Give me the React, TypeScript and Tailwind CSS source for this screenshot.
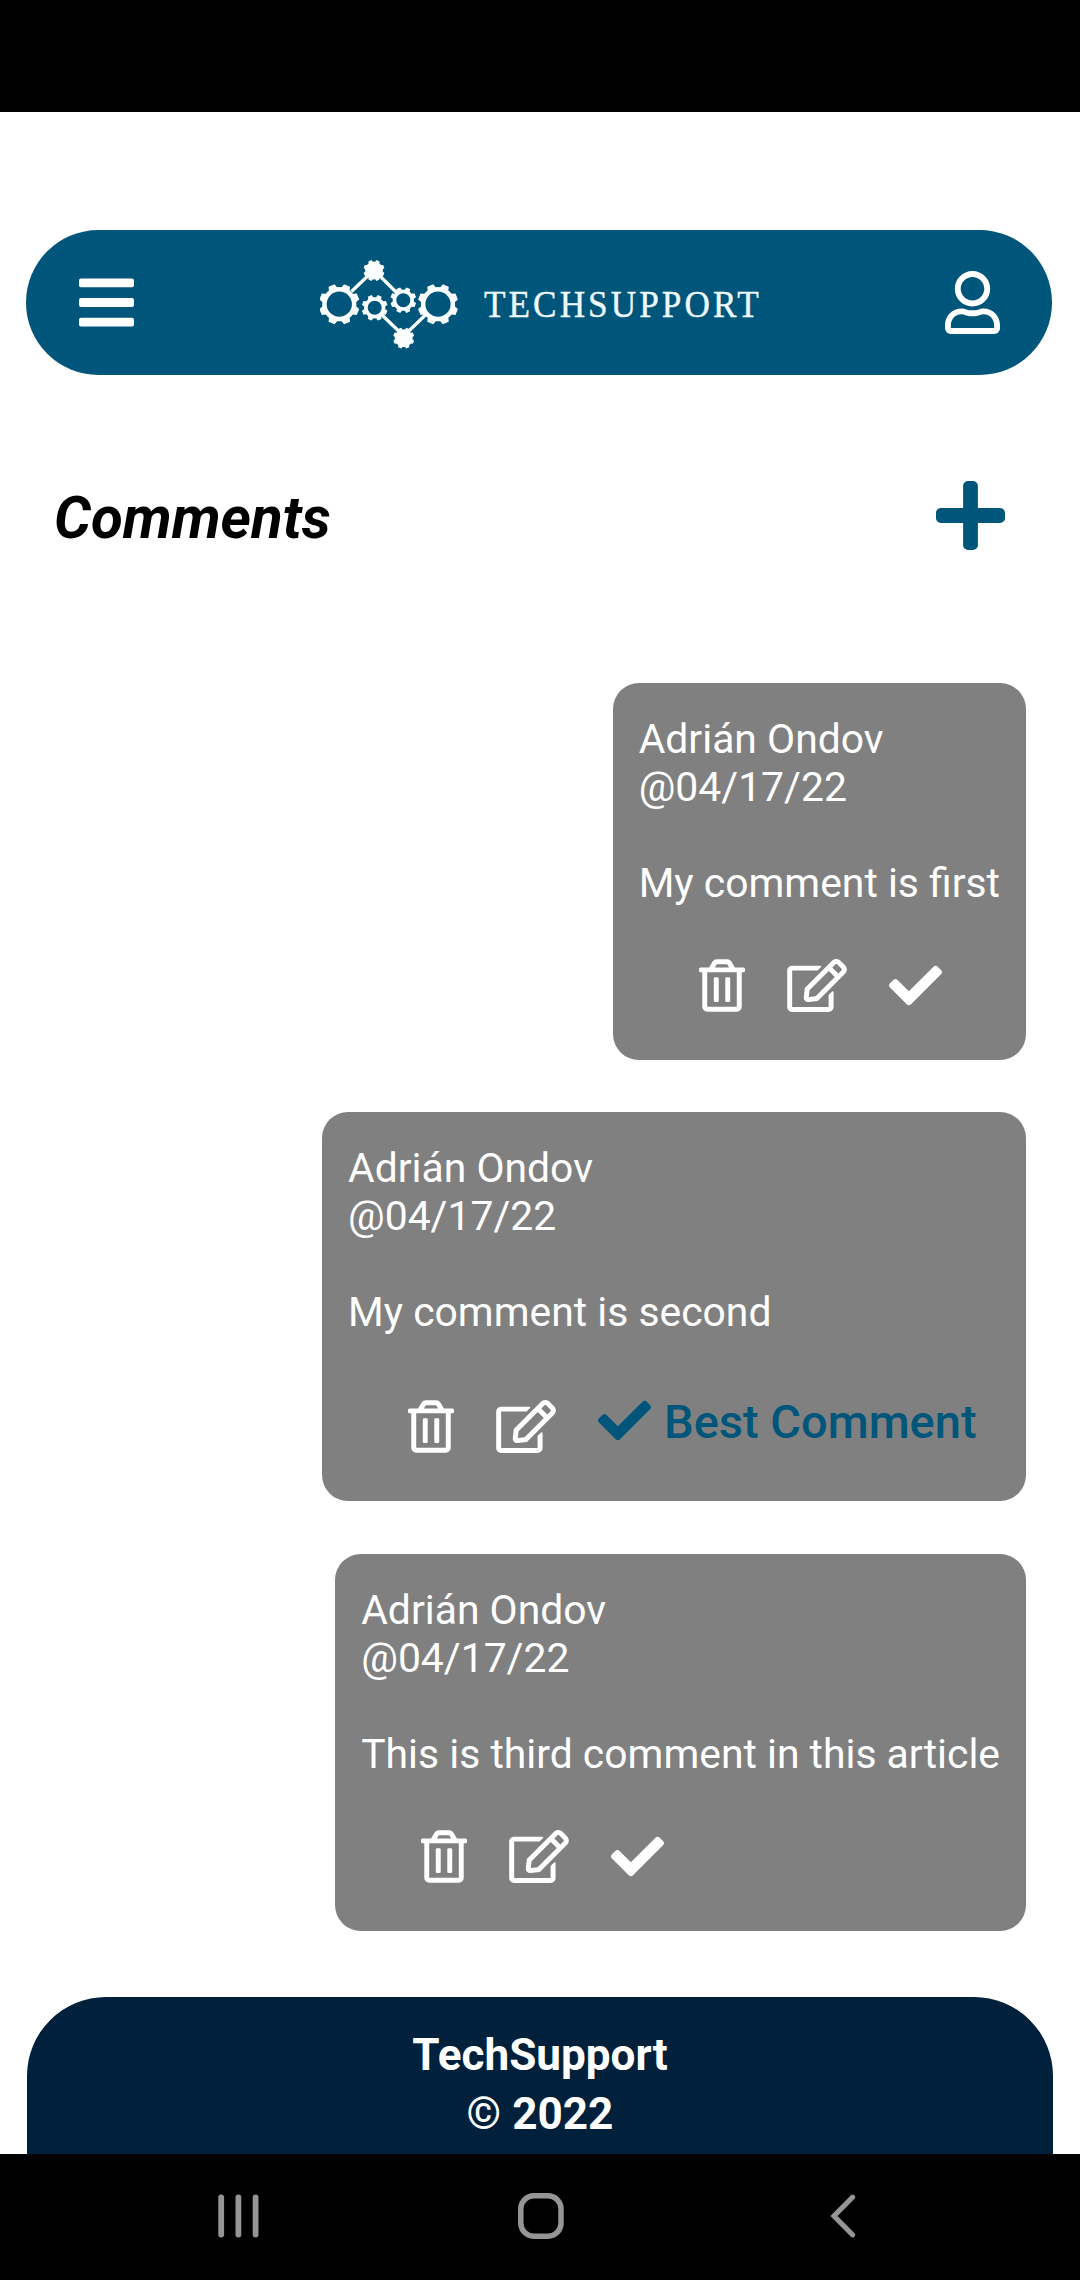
import React from "react";
import { FaBars, FaCheck, FaPlus, FaRegEdit, FaRegTrashAlt, FaRegUser } from "react-icons/fa";

type Comment = { text: string; best?: boolean };

const comments: Comment[] = [
  { text: "My comment is first" },
  { text: "My comment is second", best: true },
  { text: "This is third comment in this article" },
];

// Outline of a gear with evenly spaced trapezoid teeth.
function gear(cx: number, cy: number, outer: number, root: number, teeth: number) {
  const pts: string[] = [];
  const step = (Math.PI * 2) / teeth;
  for (let i = 0; i < teeth; i++) {
    const a = (i + 0.5) * step;
    for (const [r, d] of [[root, -0.33], [outer, -0.2], [outer, 0.2], [root, 0.33], [root, 0.5]]) {
      pts.push(`${(cx + r * Math.cos(a + d * step)).toFixed(2)} ${(cy + r * Math.sin(a + d * step)).toFixed(2)}`);
    }
  }
  return `M${pts.join("L")}Z`;
}

function ring(cx: number, cy: number, r: number) {
  return `M${cx - r} ${cy}a${r} ${r} 0 1 0 ${2 * r} 0a${r} ${r} 0 1 0 ${-2 * r} 0Z`;
}

function Logo() {
  return (
    <svg width="140" height="92" viewBox="0 0 140 92" fill="#fbffff" fillRule="evenodd">
      <path
        d="M31.5 34.5 54 13 77 36M61 57 83.7 79 108 55.5"
        fill="none"
        stroke="#fbffff"
        strokeWidth="3.3"
      />
      <path d={gear(19.3, 47.2, 20.5, 17.1, 8) + ring(19.3, 47.2, 12.6)} />
      <path d={gear(118, 47.2, 20.5, 17.1, 8) + ring(118, 47.2, 12.6)} />
      <path d={gear(54.7, 50.8, 13.1, 10.6, 8) + ring(54.7, 50.8, 7)} />
      <path d={gear(83.3, 43.2, 13.1, 10.6, 8) + ring(83.3, 43.2, 7)} />
      <path d={gear(54, 13.5, 10.7, 8.9, 8)} />
      <path d={gear(83.7, 81.2, 10.7, 8.9, 8)} />
    </svg>
  );
}

function CommentCard({ text, best }: Comment) {
  return (
    <article
      className={
        best
          ? "mb-px flex h-[389px] w-[704px] flex-col rounded-[26px] bg-[#808080] px-[26px] pt-[32px] text-white"
          : "flex h-[377px] w-fit flex-col rounded-[26px] bg-[#808080] px-[26px] pt-[32px] text-white"
      }
    >
      <div className="whitespace-nowrap text-[40.87px] leading-[48px]">
        <p>Adrián Ondov</p>
        <p>@04/17/22</p>
        <p className="mt-12">{text}</p>
      </div>
      <div className={best ? "mt-[58px] flex items-start pl-[60px]" : "mt-[51.5px] flex items-start pl-[60px]"}>
        <FaRegTrashAlt className={best ? "mt-[6px] h-[53px] w-[46px]" : "h-[53px] w-[46px]"} />
        <FaRegEdit className={best ? "mt-[6px] ml-[42px] h-[53px] w-[60px]" : "ml-[42px] h-[53px] w-[60px]"} />
        <FaCheck className={best ? "ml-[42px] size-[53px] text-[#00557a]" : "ml-[42px] size-[53px]"} />
        {best && (
          <span className="ml-[13px] whitespace-nowrap text-[47px] leading-[56px] font-medium text-[#00557a]">
            Best Comment
          </span>
        )}
      </div>
    </article>
  );
}

export default function App() {
  return (
    <div className="flex h-[2280px] w-[1080px] flex-col overflow-hidden bg-white font-['Roboto',sans-serif]">
      <div className="h-[112px] shrink-0 bg-black" />
      <header className="mt-[118px] mr-[28px] ml-[26px] flex h-[145px] shrink-0 items-center rounded-[73px] bg-[#00557a] pr-[52px] pl-[53px] text-white">
        <FaBars className="h-[63px] w-[55px]" />
        <div className="ml-[186px] flex flex-1 items-center">
          <Logo />
          <span className="mt-[3px] ml-[24px] origin-left scale-x-[0.926] font-['Liberation_Serif',serif] text-[38px] leading-none tracking-[3.3px] text-[#effaff] [-webkit-text-stroke:0.4px_#effaff]">
            TECHSUPPORT
          </span>
        </div>
        <FaRegUser className="h-[63px] w-[55px]" />
      </header>
      <div className="mt-[101px] flex h-[79px] shrink-0 items-center justify-between pr-[75px] pl-[54px]">
        <h1 className="mt-[5px] text-[58.2px] leading-[68px] font-bold text-black italic">Comments</h1>
        <FaPlus className="h-[79px] w-[69px] text-[#00557a]" />
      </div>
      <main className="mt-[128px] flex flex-1 flex-col items-end gap-[52px] pr-[54px]">
        {comments.map((c) => (
          <CommentCard key={c.text} {...c} />
        ))}
      </main>
      <footer className="mx-[27px] h-[157px] shrink-0 rounded-t-[79px] bg-[#00203c] pt-[29px] text-center text-[44.1px] leading-[59px] font-bold text-white">
        <p>TechSupport</p>
        <p>© 2022</p>
      </footer>
      <nav className="flex h-[126px] shrink-0 items-center bg-black pb-[3px] pl-[217px] text-[#959595]">
        <svg width="42" height="44" viewBox="0 0 42 44" fill="none" stroke="currentColor" strokeWidth="5.8" strokeLinecap="round">
          <path d="M4.2 3.5v37M21.4 3.5v37M38.6 3.5v37" />
        </svg>
        <svg className="ml-[259px]" width="46" height="46" viewBox="0 0 46 46" fill="none" stroke="currentColor" strokeWidth="5.5">
          <rect x="2.8" y="2.8" width="40.2" height="40.4" rx="13" />
        </svg>
        <svg className="ml-[266px]" width="27" height="44" viewBox="0 0 27 44" fill="none" stroke="currentColor" strokeWidth="5.2" strokeLinecap="round">
          <path d="M22.5 3.2 4 22l18.5 18.8" />
        </svg>
      </nav>
    </div>
  );
}
